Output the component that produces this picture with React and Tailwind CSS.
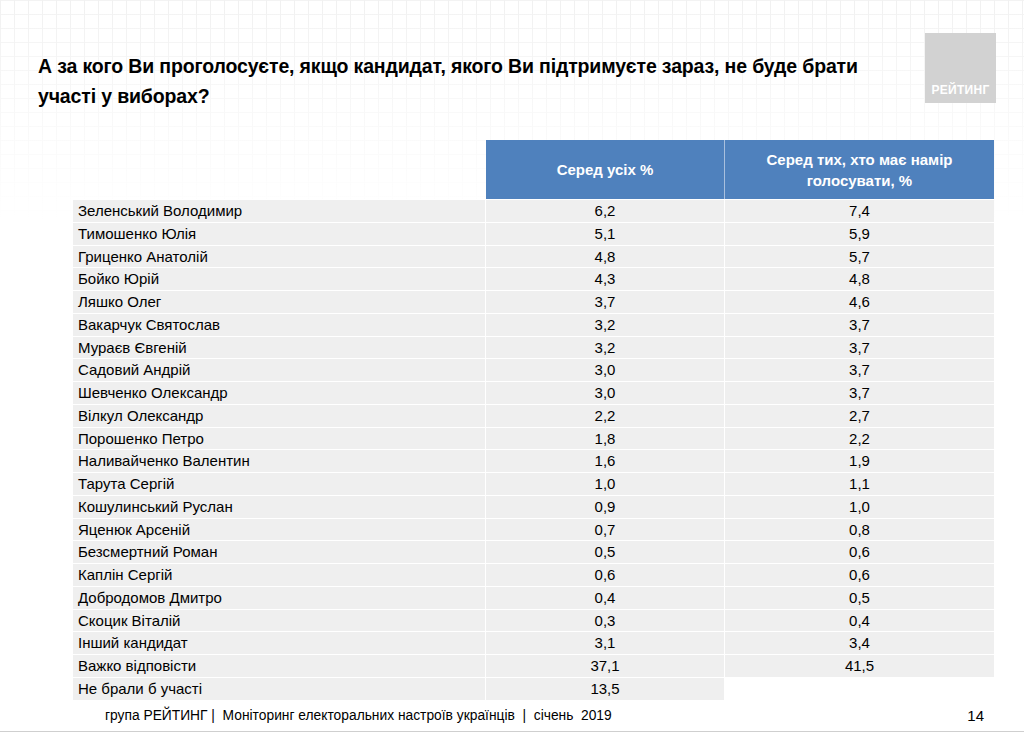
import React from 'react';

const rows = [
  ['Зеленський Володимир', '6,2', '7,4'],
  ['Тимошенко Юлія', '5,1', '5,9'],
  ['Гриценко Анатолій', '4,8', '5,7'],
  ['Бойко Юрій', '4,3', '4,8'],
  ['Ляшко Олег', '3,7', '4,6'],
  ['Вакарчук Святослав', '3,2', '3,7'],
  ['Мураєв Євгеній', '3,2', '3,7'],
  ['Садовий Андрій', '3,0', '3,7'],
  ['Шевченко Олександр', '3,0', '3,7'],
  ['Вілкул Олександр', '2,2', '2,7'],
  ['Порошенко Петро', '1,8', '2,2'],
  ['Наливайченко Валентин', '1,6', '1,9'],
  ['Тарута Сергій', '1,0', '1,1'],
  ['Кошулинський Руслан', '0,9', '1,0'],
  ['Яценюк Арсеній', '0,7', '0,8'],
  ['Безсмертний Роман', '0,5', '0,6'],
  ['Каплін Сергій', '0,6', '0,6'],
  ['Добродомов Дмитро', '0,4', '0,5'],
  ['Скоцик Віталій', '0,3', '0,4'],
  ['Інший кандидат', '3,1', '3,4'],
  ['Важко відповісти', '37,1', '41,5'],
  ['Не брали б участі', '13,5', null],
];

const App = () => {
  return (
    <div
      className="relative w-[1024px] h-[732px] overflow-hidden bg-white text-black font-['Liberation_Sans',Arial,sans-serif] bg-[linear-gradient(to_bottom,rgba(255,255,255,0)_0px,#fff_220px),linear-gradient(to_right,#f1f1f1_1px,transparent_1px),linear-gradient(to_bottom,#f3f3f3_1px,transparent_1px)] bg-[size:100%_100%,14px_14px,14px_14px]"
    >
      {/* title + logo */}
      <div className="flex justify-between pl-[38px] pr-[28px] pt-[33px]">
        <h1 className="pt-[18px] text-[19.5px] font-bold leading-[30px] tracking-[-0.15px] w-[850px]">
          А за кого Ви проголосуєте, якщо кандидат, якого Ви підтримуєте зараз, не буде брати участі у виборах?
        </h1>
        <div className="w-[71px] h-[70px] bg-[#d2d2d2] flex items-end justify-center pb-[4px]">
          <span className="text-white text-[12px] font-bold tracking-[0.3px]">РЕЙТИНГ</span>
        </div>
      </div>

      {/* table */}
      <div className="ml-[73px] mt-[29px] w-[921px] text-[15px]">
        <div className="flex h-[59px]">
          <div className="w-[413px]" />
          <div className="w-[239px] bg-[#4f81bd] text-white font-bold flex items-center justify-center text-center leading-[21px] border-r border-[#a9c0de]">
            Серед усіх %
          </div>
          <div className="w-[269px] bg-[#4f81bd] text-white font-bold flex items-center justify-center text-center leading-[21px]">
            Серед тих, хто має намір<br />голосувати, %
          </div>
        </div>
        {rows.map((r, i) => (
          <div key={i} className="flex h-[22.75px] leading-[22px] border-t border-white">
            <div className="w-[413px] bg-[#efefef] pl-[5px] border-r border-white">{r[0]}</div>
            <div className="w-[239px] bg-[#efefef] text-center border-r border-white">{r[1]}</div>
            <div className={r[2] ? 'w-[269px] bg-[#efefef] text-center' : 'w-[269px]'}>{r[2]}</div>
          </div>
        ))}
      </div>

      {/* footer */}
      <div className="absolute left-0 right-0 bottom-0 h-[30px] border-b border-[#cfcfcf] flex items-center justify-between pl-[105px] pr-[40px] text-[13.8px]">
        <span className="whitespace-pre">група РЕЙТИНГ |  Моніторинг електоральних настроїв українців  |  січень  2019</span>
        <span className="text-[15px]">14</span>
      </div>
    </div>
  );
};

export default App;
